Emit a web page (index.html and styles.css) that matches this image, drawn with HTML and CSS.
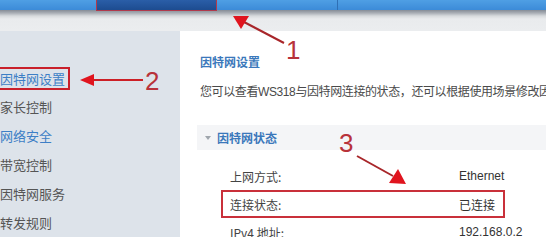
FILE: index.html
```html
<!DOCTYPE html>
<html lang="zh-CN">
<head>
<meta charset="utf-8">
<title>因特网设置</title>
<link rel="stylesheet" href="styles.css">
</head>
<body>
<div class="page">
  <header class="topbar">
    <nav class="nav">
      <div class="nav-active"></div>
      <div class="nav-fill"></div>
      <div class="nav-fill"></div>
    </nav>
    <div class="shade"></div>
  </header>
  <div class="main">
    <aside class="sidebar">
      <ul class="menu">
        <li class="menu-item current"><span class="mark">因特网设置</span></li>
        <li class="menu-item">家长控制</li>
        <li class="menu-item active">网络安全</li>
        <li class="menu-item">带宽控制</li>
        <li class="menu-item">因特网服务</li>
        <li class="menu-item">转发规则</li>
      </ul>
    </aside>
    <section class="panel">
      <h1 class="title">因特网设置</h1>
      <p class="desc">您可以查看<span class="latin">WS318</span>与因特网连接的状态，还可以根据使用场景修改因特网连接方式。</p>
      <div class="group-head"><span class="caret"></span>因特网状态</div>
      <div class="rows">
        <div class="row"><span class="label">上网方式:</span><span class="value latin">Ethernet</span></div>
        <div class="row highlight"><span class="label">连接状态:</span><span class="value">已连接</span></div>
        <div class="row"><span class="label">IPv4 地址:</span><span class="value latin">192.168.0.2</span></div>
      </div>
    </section>
  </div>
  <svg class="annot" width="546" height="237" viewBox="0 0 546 237">
    <line x1="284" y1="43" x2="244" y2="22" stroke="#a8262a" stroke-width="2"/>
    <polygon points="233,16 249,16 241,29" fill="#e0141e"/>
    <line x1="92" y1="80" x2="143" y2="80" stroke="#cc1f26" stroke-width="2"/>
    <polygon points="80,80 94,74 94,86" fill="#e0141e"/>
    <line x1="357" y1="156" x2="393" y2="176" stroke="#a8262a" stroke-width="2"/>
    <polygon points="406,184 389,183 398,169" fill="#e0141e"/>
  </svg>
  <span class="num n1">1</span>
  <span class="num n2">2</span>
  <span class="num n3">3</span>
</div>
</body>
</html>
```
FILE: styles.css
```css
* { box-sizing: border-box; margin: 0; padding: 0; }
html, body { width: 546px; height: 237px; overflow: hidden; background: #dde3ea; }
body {
  font-family: "Noto Sans CJK SC", "Liberation Sans", sans-serif;
  color: #444;
}
.page { position: relative; width: 546px; height: 237px; overflow: hidden; display: flex; flex-direction: column; }
.latin { font-family: "Liberation Sans", "Noto Sans CJK SC", sans-serif; }

.topbar { flex: none; }
.nav {
  height: 10px;
  display: flex;
  background: linear-gradient(#4f9fe4, #3c8bd8);
  padding-left: 96px;
}
.nav-active {
  width: 121px;
  height: 11px;
  background: linear-gradient(#2a5ea8, #1d4c90);
  border: 1px solid #b03a4c;
  border-top: none;
}
.nav-fill { width: 121px; border-right: 1px solid #2f6fb5; }
.nav-fill + .nav-fill { border-right: none; flex: 1; }
.shade {
  height: 21px;
  background: linear-gradient(#858c96 0px, #a9aeb5 3px, #d7dadd 6px, #e9ebed 9px, #ebedef 21px);
}

.main { flex: 1; display: flex; }
.sidebar { width: 180px; flex: none; background: #dde3ea; padding-top: 32px; }
.menu { list-style: none; }
.menu-item {
  height: 29px;
  line-height: 29px;
  font-size: 13px;
  color: #555;
  white-space: nowrap;
}
.menu-item.active { color: #3d7fc6; }
.menu-item.current { color: #3d7fc6; }
.mark {
  display: inline-block;
  line-height: 19px;
  padding: 0 3px 0 0;
  border: 2px solid #c9202b;
  border-left: none;
  margin-top: 4px;
}

.panel { flex: 1; background: #fff; padding: 22px 0 0 20px; white-space: nowrap; overflow: hidden; }
.title { font-size: 12px; font-weight: bold; color: #3b78bb; line-height: 18px; }
.desc { font-size: 12px; color: #4a4a4a; line-height: 18px; margin-top: 11px; letter-spacing: -0.4px; }
.group-head {
  margin: 24px 0 0 -3px;
  height: 25px;
  line-height: 25px;
  background: #f4f5f7;
  font-size: 12px;
  font-weight: bold;
  color: #3b78bb;
  padding-left: 8px;
  display: flex;
  align-items: center;
}
.caret {
  width: 0; height: 0;
  border-left: 3px solid transparent;
  border-right: 3px solid transparent;
  border-top: 4px solid #a0a6ad;
  margin-right: 6px;
}
.rows { margin-top: 12px; padding-left: 21px; }
.row {
  height: 28px;
  display: flex;
  align-items: center;
  font-size: 12px;
  color: #444;
  width: 284px;
}
.row .label { width: 238px; padding-left: 9px; flex: none; }
.row .value { color: #333; }
.row.highlight { border: 2px solid #c9303a; }
.row.highlight .label { padding-left: 7px; }
.row.highlight .value { margin-left: -2px; }

.annot { position: absolute; left: 0; top: 0; pointer-events: none; }
.num {
  position: absolute;
  font-family: "Liberation Sans", sans-serif;
  font-size: 26px;
  line-height: 26px;
  color: #b8323a;
}
.n1 { left: 286px; top: 37px; }
.n2 { left: 145px; top: 68px; }
.n3 { left: 339px; top: 130px; }
```
